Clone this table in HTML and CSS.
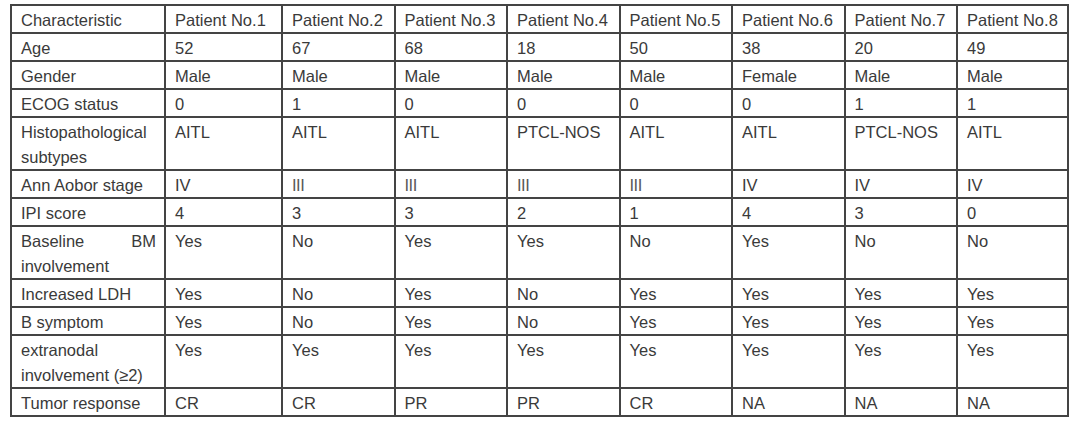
FILE: index.html
```html
<!DOCTYPE html>
<html>
<head>
<meta charset="utf-8">
<link rel="stylesheet" href="styles.css">
</head>
<body>
<div class="page">
<table class="grid">
  <colgroup>
    <col class="c-label"><col class="c-p1"><col class="c-p"><col class="c-p"><col class="c-p"><col class="c-p"><col class="c-p"><col class="c-p"><col class="c-p8">
  </colgroup>
  <tbody>
    <tr><td>Characteristic</td><td>Patient No.1</td><td>Patient No.2</td><td>Patient No.3</td><td>Patient No.4</td><td>Patient No.5</td><td>Patient No.6</td><td>Patient No.7</td><td>Patient No.8</td></tr>
    <tr><td>Age</td><td>52</td><td>67</td><td>68</td><td>18</td><td>50</td><td>38</td><td>20</td><td>49</td></tr>
    <tr><td>Gender</td><td>Male</td><td>Male</td><td>Male</td><td>Male</td><td>Male</td><td>Female</td><td>Male</td><td>Male</td></tr>
    <tr><td>ECOG status</td><td>0</td><td>1</td><td>0</td><td>0</td><td>0</td><td>0</td><td>1</td><td>1</td></tr>
    <tr class="tall"><td>Histopathological subtypes</td><td>AITL</td><td>AITL</td><td>AITL</td><td>PTCL-NOS</td><td>AITL</td><td>AITL</td><td>PTCL-NOS</td><td>AITL</td></tr>
    <tr><td>Ann Aobor stage</td><td>IV</td><td><span class="roman">III</span></td><td><span class="roman">III</span></td><td><span class="roman">III</span></td><td><span class="roman">III</span></td><td>IV</td><td>IV</td><td>IV</td></tr>
    <tr><td>IPI score</td><td>4</td><td>3</td><td>3</td><td>2</td><td>1</td><td>4</td><td>3</td><td>0</td></tr>
    <tr class="tall"><td>Baseline BM involvement</td><td>Yes</td><td>No</td><td>Yes</td><td>Yes</td><td>No</td><td>Yes</td><td>No</td><td>No</td></tr>
    <tr><td>Increased LDH</td><td>Yes</td><td>No</td><td>Yes</td><td>No</td><td>Yes</td><td>Yes</td><td>Yes</td><td>Yes</td></tr>
    <tr><td>B symptom</td><td>Yes</td><td>No</td><td>Yes</td><td>No</td><td>Yes</td><td>Yes</td><td>Yes</td><td>Yes</td></tr>
    <tr class="tall"><td>extranodal involvement (≥2)</td><td>Yes</td><td>Yes</td><td>Yes</td><td>Yes</td><td>Yes</td><td>Yes</td><td>Yes</td><td>Yes</td></tr>
    <tr><td>Tumor response</td><td>CR</td><td>CR</td><td>PR</td><td>PR</td><td>CR</td><td>NA</td><td>NA</td><td>NA</td></tr>
  </tbody>
</table>
</div>
</body>
</html>
```

FILE: styles.css
```css
html, body {
  margin: 0;
  padding: 0;
  background: #ffffff;
}

.page {
  padding: 4px 0 0 10px;
}

.grid {
  border-collapse: collapse;
  table-layout: fixed;
  width: 1059px;
  font-family: "Liberation Sans", Arial, sans-serif;
  font-size: 16.5px;
  color: #3a3a3a;
}

.c-label { width: 154px; }
.c-p1 { width: 117px; }
.c-p { width: 112.5px; }
.c-p8 { width: 111px; }

.grid td {
  border: 2px solid #444444;
  padding: 2px 8px 0 9px;
  line-height: 24px;
  vertical-align: top;
  text-align: left;
  white-space: normal;
}

.grid td:first-child {
  text-align: justify;
}

.grid tr.tall td {
  line-height: 24.5px;
}

.roman {
  color: #5a5a5a;
  letter-spacing: -0.5px;
}
```
